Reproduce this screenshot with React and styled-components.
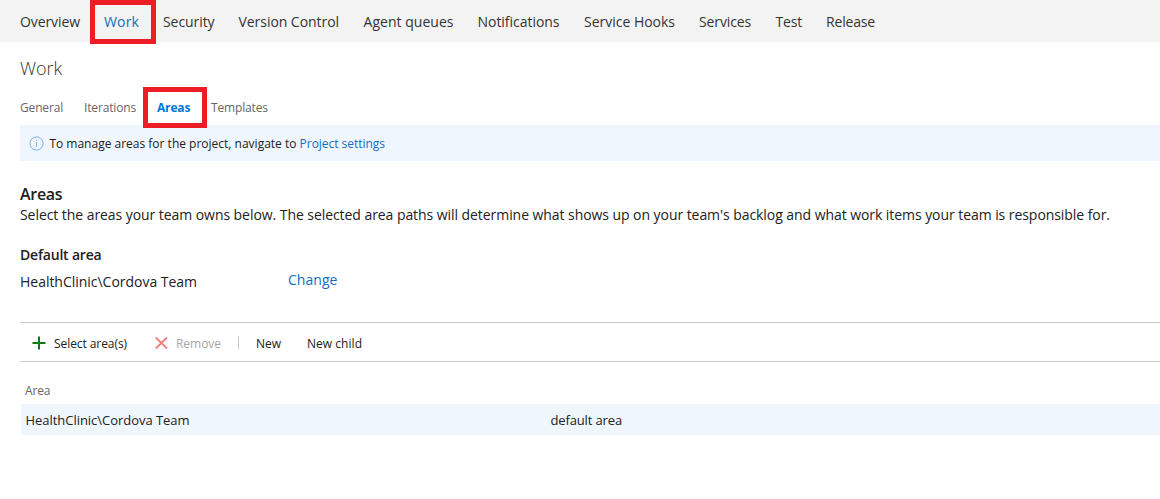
import React from 'react';
import styled, { createGlobalStyle } from 'styled-components';

const GlobalStyle = createGlobalStyle`
  * { box-sizing: border-box; }
  body {
    margin: 0;
    background: #fff;
    color: #212121;
    font-family: "Segoe UI", "Open Sans", "Noto Sans", sans-serif;
    overflow: hidden;
  }
`;

const Page = styled.div`
  height: 499px;
  overflow: hidden;
  white-space: nowrap;
`;

const NavBar = styled.nav`
  display: flex;
  height: 42px;
  padding: 1px 0 0 20px;
  background: #f3f3f3;
`;

const NavItem = styled.a`
  position: relative;
  flex: none;
  width: ${(p) => p.$width}px;
  font-size: 14px;
  line-height: 42px;
  letter-spacing: ${(p) => p.$track || 0}px;
  color: ${(p) => (p.$active ? '#106ebe' : '#333')};
`;

const Marker = styled.span`
  position: absolute;
  left: ${(p) => p.$left}px;
  top: ${(p) => p.$top}px;
  width: ${(p) => p.$width}px;
  height: ${(p) => p.$height}px;
  border: 5px solid #ee1c25;
`;

const Content = styled.main`
  padding-left: 20px;
`;

const Title = styled.h1`
  margin: 0;
  padding-top: 12px;
  font-size: 18px;
  font-weight: 300;
  line-height: 28px;
  letter-spacing: -0.08px;
  color: #333;
`;

const Tabs = styled.div`
  display: flex;
  height: 43px;
  padding-top: 16px;
`;

const Tab = styled.a`
  position: relative;
  flex: none;
  width: ${(p) => p.$width}px;
  font-size: 12px;
  line-height: 20px;
  letter-spacing: -0.16px;
  font-weight: ${(p) => (p.$active ? 700 : 400)};
  color: ${(p) => (p.$active ? '#0078d7' : '#666')};
`;

const InfoBar = styled.div`
  display: flex;
  align-items: center;
  height: 36px;
  padding-left: 9px;
  background: #f0f6fe;
  font-size: 12px;
  letter-spacing: 0;

  svg { margin-right: 5.4px; }
`;

const Link = styled.a`
  color: #106ebe;
`;

const InfoLink = styled(Link)`
  letter-spacing: -0.03px;
`;

const Section = styled.section`
  padding-top: 23px;
`;

const Heading = styled.h2`
  margin: 0;
  font-size: 16px;
  font-weight: 600;
  line-height: 20px;
  letter-spacing: -0.3px;
`;

const Description = styled.p`
  margin: 0;
  font-size: 14px;
  line-height: 22px;
  letter-spacing: -0.061px;
`;

const SubHeading = styled.h3`
  margin: 18px 0 0;
  font-size: 14px;
  font-weight: 600;
  line-height: 22px;
  letter-spacing: -0.2px;
`;

const DefaultArea = styled.div`
  display: flex;
  height: 56px;
  font-size: 14px;
  line-height: 22px;
  letter-spacing: -0.024px;
`;

const AreaPath = styled.span`
  width: 268px;
  padding-top: 5px;
`;

const ChangeLink = styled(Link)`
  padding-top: 3px;
  letter-spacing: 0.045px;
`;

const Toolbar = styled.div`
  display: flex;
  align-items: center;
  height: 40px;
  padding: 4px 0 0 12px;
  border-top: 1px solid #c8c8c8;
  border-bottom: 1px solid #c8c8c8;
`;

const Command = styled.button`
  display: flex;
  align-items: center;
  flex: none;
  width: ${(p) => p.$width}px;
  padding: 0;
  border: 0;
  background: none;
  font: 12px/20px "Segoe UI", "Open Sans", "Noto Sans", sans-serif;
  letter-spacing: ${(p) => p.$track || 0}px;
  color: ${(p) => (p.$disabled ? '#a6a6a6' : '#212121')};

  svg { margin: 0 8px 2px 0; }
`;

const Separator = styled.span`
  flex: none;
  width: 1px;
  height: 13px;
  margin: 0 17px 4px 0;
  background: #c8c8c8;
`;

const ColumnHeader = styled.div`
  height: 42px;
  padding: 19px 0 0 5px;
  font-size: 12px;
  line-height: 20px;
  letter-spacing: -0.15px;
  color: #666;
`;

const Row = styled.div`
  display: grid;
  grid-template-columns: 525px 1fr;
  height: 31px;
  margin-left: 1px;
  padding-left: 4.5px;
  background: #eff6fc;
  font-size: 13px;
  line-height: 32px;
`;

const Cell = styled.span`
  letter-spacing: ${(p) => p.$track}px;
`;

const InfoIcon = () => (
  <svg width="15" height="15" viewBox="0 0 15 15" fill="none" stroke="#7fb2e5">
    <circle cx="7.5" cy="7.5" r="6.6" />
    <path d="M7.5 6v5M7.5 3.6v1.2" />
  </svg>
);

const PlusIcon = () => (
  <svg width="14" height="14" viewBox="0 0 14 14" fill="none" stroke="#107c10" strokeWidth="2">
    <path d="M.5 7h13M7 .5v13" />
  </svg>
);

const CrossIcon = () => (
  <svg width="13" height="12" viewBox="0 0 13 12" fill="none" stroke="#f08078" strokeWidth="2">
    <path d="M.8.6l11.2 10.8M12 .6L.8 11.4" />
  </svg>
);

const NAV = [
  ['Overview', 84, -0.088],
  ['Work', 59, 0.144],
  ['Security', 75.5, -0.074],
  ['Version Control', 125, -0.052],
  ['Agent queues', 114, 0.028],
  ['Notifications', 106.5, -0.032],
  ['Service Hooks', 115, -0.014],
  ['Services', 76.5, -0.128],
  ['Test', 50.5, -0.2],
  ['Release', 60, -0.173],
];

const TABS = [
  ['General', 64],
  ['Iterations', 73],
  ['Areas', 54],
  ['Templates', 70],
];

export default function App() {
  return (
    <Page>
      <GlobalStyle />
      <NavBar>
        {NAV.map(([label, width, track]) => (
          <NavItem key={label} $width={width} $track={track} $active={label === 'Work'}>
            {label}
            {label === 'Work' && <Marker $left={-14} $top={-1} $width={66} $height={44} />}
          </NavItem>
        ))}
      </NavBar>
      <Content>
        <Title>Work</Title>
        <Tabs>
          {TABS.map(([label, width]) => (
            <Tab key={label} $width={width} $active={label === 'Areas'}>
              {label}
              {label === 'Areas' && <Marker $left={-14} $top={-11} $width={64} $height={41} />}
            </Tab>
          ))}
        </Tabs>
        <InfoBar>
          <InfoIcon />
          <span>
            To manage areas for the project, navigate to <InfoLink>Project settings</InfoLink>
          </span>
        </InfoBar>
        <Section>
          <Heading>Areas</Heading>
          <Description>
            Select the areas your team owns below. The selected area paths will determine what shows
            up on your team's backlog and what work items your team is responsible for.
          </Description>
          <SubHeading>Default area</SubHeading>
          <DefaultArea>
            <AreaPath>HealthClinic\Cordova Team</AreaPath>
            <ChangeLink>Change</ChangeLink>
          </DefaultArea>
        </Section>
        <Toolbar>
          <Command $width={123} $track={-0.072}><PlusIcon />Select area(s)</Command>
          <Command $width={83} $track={-0.034} $disabled><CrossIcon />Remove</Command>
          <Separator />
          <Command $width={51}>New</Command>
          <Command $width={60} $track={0.034}>New child</Command>
        </Toolbar>
        <ColumnHeader>Area</ColumnHeader>
        <Row>
          <Cell $track={-0.036}>HealthClinic\Cordova Team</Cell>
          <Cell $track={-0.14}>default area</Cell>
        </Row>
      </Content>
    </Page>
  );
}
